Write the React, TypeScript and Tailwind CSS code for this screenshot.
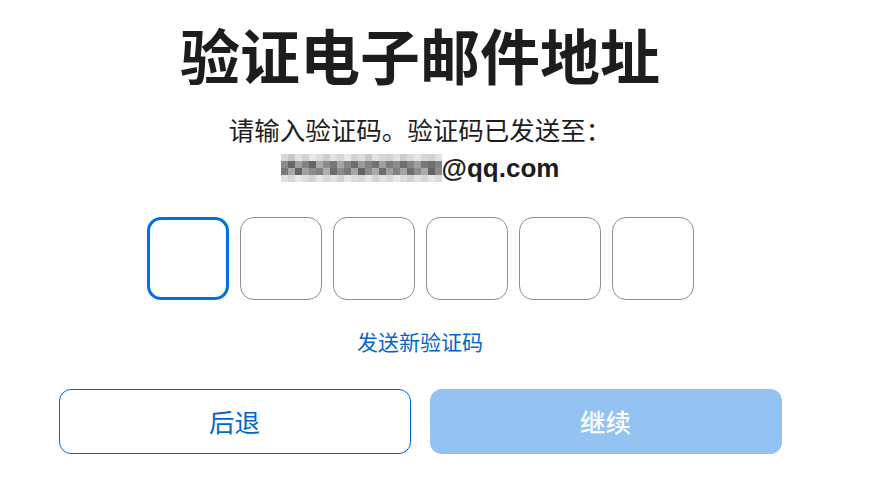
import React from "react";

const FONT = '"Noto Sans CJK SC", "Noto Sans", sans-serif';

const pixelRows: number[][] = [
  [215, 200, 225, 210, 230, 220, 205, 225, 215, 230, 210, 220, 200, 225, 215, 210, 225, 205, 220, 230, 215, 210, 225],
  [140, 105, 160, 130, 100, 170, 140, 120, 165, 135, 110, 155, 130, 115, 160, 125, 140, 110, 135, 160, 120, 110, 130],
  [120, 170, 100, 160, 140, 130, 175, 110, 140, 120, 165, 100, 140, 170, 110, 160, 130, 165, 110, 140, 170, 100, 140],
  [225, 215, 230, 220, 210, 230, 215, 225, 210, 230, 220, 215, 230, 210, 225, 215, 230, 220, 210, 225, 215, 230, 220],
];

function Pixelated() {
  return (
    <div className="flex flex-col">
      {pixelRows.map((row, r) => (
        <div key={r} className="flex">
          {row.map((v, c) => (
            <div
              key={c}
              className="w-[7px] h-[7px]"
              style={{ backgroundColor: `rgb(${v},${v},${v})` }}
            />
          ))}
        </div>
      ))}
    </div>
  );
}

export default function App() {
  return (
    <div className="w-[869px] h-[491px] bg-white overflow-hidden" style={{ fontFamily: FONT }}>
      <div className="w-[840px] flex flex-col items-center">
        <h1 className="mt-[14px] text-[60px] leading-[80px] font-bold text-[#1d1d1f]">
          验证电子邮件地址
        </h1>
        <p className="mt-[19px] text-[25.5px] leading-[32px] text-[#1d1d1f]">
          请输入验证码。验证码已发送至：
        </p>
        <div className="mt-[5px] flex items-center h-[36px]">
          <Pixelated />
          <span
            className="text-[26px] font-bold text-[#1d1d1f]"
            style={{ fontFamily: '"Liberation Sans", Arial, sans-serif' }}
          >
            @qq.com
          </span>
        </div>
        <div className="mt-[31px] flex gap-[11px]">
          <div className="w-[82px] h-[83px] rounded-[14px] border-[3px] border-[#0071e3]" />
          <div className="w-[82px] h-[83px] rounded-[14px] border border-[#8e8e93]" />
          <div className="w-[82px] h-[83px] rounded-[14px] border border-[#8e8e93]" />
          <div className="w-[82px] h-[83px] rounded-[14px] border border-[#8e8e93]" />
          <div className="w-[82px] h-[83px] rounded-[14px] border border-[#8e8e93]" />
          <div className="w-[82px] h-[83px] rounded-[14px] border border-[#8e8e93]" />
        </div>
        <a className="mt-[27px] text-[21px] leading-[28px] text-[#0066cc]">发送新验证码</a>
        <div className="mt-[34px] flex gap-[19px]">
          <button className="w-[352px] h-[65px] rounded-[12px] border border-[#0066cc] bg-white text-[25.5px] text-[#0066cc]">
            后退
          </button>
          <button className="w-[352px] h-[65px] rounded-[12px] bg-[#94c2f2] text-[25.5px] text-white font-medium">
            继续
          </button>
        </div>
      </div>
    </div>
  );
}
